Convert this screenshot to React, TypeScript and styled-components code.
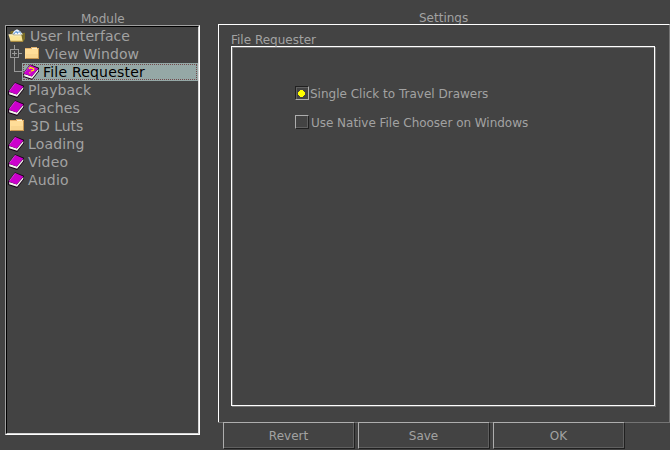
import React from "react";
import styled, { createGlobalStyle } from "styled-components";

const GlobalStyle = createGlobalStyle`
  * { box-sizing: border-box; }
  html, body, #root { margin: 0; width: 100%; height: 450px; overflow: hidden; background: #434343; }
`;

const Window = styled.main`
  display: grid;
  grid-template-columns: 200px 452px;
  column-gap: 18px;
  width: 670px;
  height: 450px;
  overflow: hidden;
  background: #434343;
  color: #a2a2a2;
  font: 12px/14px "DejaVu Sans", sans-serif;
  white-space: nowrap;
`;

const ModulePane = styled.section`
  display: flex;
  flex-direction: column;
  padding: 12px 0 0 5px;
`;

const Caption = styled.div<{ $shift: number }>`
  height: 13px;
  padding-left: ${(p) => p.$shift}px;
`;

const Tree = styled.div`
  height: 410px;
  border: 1px solid;
  border-color: #a0a0a0 #fff #fff #a0a0a0;
`;

const TreeInner = styled.div`
  height: 408px;
  border: 1px solid;
  border-color: #000 #d6d6d6 #d6d6d6 #000;
`;

const Row = styled.div`
  display: flex;
  height: 18px;
  padding-left: 1px;
  font-size: 14px;
  line-height: 18px;
`;

const RowIcon = styled.svg`
  width: 16px;
  height: 16px;
  margin-top: 1px;
  flex: none;
  overflow: visible;
`;

const RowText = styled.span<{ $gap: number; $tracking?: number }>`
  padding-left: ${(p) => p.$gap}px;
  letter-spacing: ${(p) => p.$tracking ?? 0}px;
`;

const Branch = styled.svg`
  width: 15px;
  height: 18px;
  flex: none;
`;

const Selected = styled.div`
  display: flex;
  flex: 1;
  height: 18px;
  margin-left: -1px;
  background: #95a8a6;
  color: #000;
  padding: 1px;
  outline: 1px dotted #70494b;
  outline-offset: -2px;
  line-height: 16px;
  & > svg { margin-top: 0; }
`;

const SettingsPane = styled.section`
  display: flex;
  flex-direction: column;
  padding-top: 11px;
`;

const Group = styled.div`
  height: 398px;
  padding: 8px 0 0 12px;
  border: solid;
  border-width: 1px 1px 0 1px;
  border-color: #fff #747474 #fff #fff;
`;

const Panel = styled.div`
  display: flex;
  flex-direction: column;
  gap: 15px;
  width: 424px;
  height: 360px;
  padding: 39px 0 0 63px;
  border: 1px solid #fff;
  box-shadow: 1px 1px 0 #747474, inset 1px 1px 0 #747474;
`;

const Option = styled.label`
  display: flex;
  height: 14px;
  line-height: 16px;
`;

const Box = styled.span<{ $on?: boolean }>`
  display: flex;
  padding: 3px 0 0 2px;
  width: 14px;
  height: 14px;
  border: 1px solid;
  border-color: ${(p) => (p.$on ? "#202020 #aeaeae #aeaeae #202020" : "#aeaeae #202020 #202020 #aeaeae")};
  box-shadow: ${(p) => (p.$on ? "inset 1px 1px 0 #606060" : "inset -1px -1px 0 #606060")};
`;

const Dot = styled.svg`
  width: 7px;
  height: 7px;
`;

const Buttons = styled.div`
  display: flex;
  gap: 3px;
  height: 28px;
  padding-left: 5px;
  border-top: 1px solid #747474;
`;

const Button = styled.button`
  width: 132px;
  height: 27px;
  margin: -1px 0 0;
  padding: 0 1px 0 0;
  background: #434343;
  color: #a2a2a2;
  font: inherit;
  border: 1px solid;
  border-color: #aeaeae #202020 #202020 #aeaeae;
  box-shadow: inset -1px -1px 0 #606060;
`;

const Book = ({ help = false }: { help?: boolean }) => (
  <RowIcon viewBox="0 0 16 16">
    <path d="M0 9.5L7 .2 16 3.8v3.4L9.2 16 .3 13z" fill="#150015" />
    <path d="M1.2 10l7.6 2.6L15.3 5v2l-6.2 7.8L1.2 12.2z" fill="#f2f1ec" />
    <path d="M.8 9.6L7.3 1l8 3.4-6.6 8z" fill="#cc00cc" />
    <path d="M1.6 8.6L7.2 1.2" fill="none" stroke="#ef62ef" strokeWidth=".7" />
    {help && (
      <path d="M6 4.8L7.3 3.6l3.4 1.1-.2 1.6-2.7.8M6.3 8.6l1.2.4" fill="none" stroke="#ffe800" strokeWidth="1.3" />
    )}
  </RowIcon>
);

const Folder = () => (
  <RowIcon viewBox="0 0 16 16" shapeRendering="crispEdges">
    <path d="M2 2h6V1h6v1h2v11H2z" fill="#e2b16c" />
    <path d="M2 3h13v9H2z" fill="#ffdd98" />
    <path d="M9 2h5v1H9z" fill="#fff0cb" />
    <path d="M3 8h12v4H3z" fill="#f9d58f" />
    <path d="M15 3h1v10H3v-1h12z" fill="#c4944f" />
  </RowIcon>
);

const OpenFolder = () => (
  <RowIcon viewBox="0 0 16 16">
    <path d="M2 5l1-2h3l8 2 3-.2V11l-2 3z" fill="#796c26" />
    <path d="M4 6.5L6 3l3-1.7L12 3l3 3.5z" fill="#e7f3ff" />
    <path d="M5 6l3-3 2 1 2-1 1 3z" fill="#5f98d5" />
    <path d="M6 6.5l2-2.2L9.5 6 11 4l2.5 2.5z" fill="#fff" />
    <path d="M.5 6.5h4l1 1h8l1.2 5.9H2.6z" fill="#fae696" />
    <path d="M.7 6.8h3.6l1 1h8" fill="none" stroke="#fffad9" strokeWidth=".8" />
    <path d="M2.8 13.3h12" fill="none" stroke="#aa8837" />
  </RowIcon>
);

const modules = [
  { name: "Playback", tracking: 0.08 },
  { name: "Caches", tracking: 0.2 },
  { name: "3D Luts", tracking: 0, folder: true },
  { name: "Loading", tracking: 0.18 },
  { name: "Video", tracking: 0.2 },
  { name: "Audio", tracking: 0.2 },
];

export default function App() {
  return (
    <>
      <GlobalStyle />
      <Window>
        <ModulePane>
          <Caption $shift={76}>Module</Caption>
          <Tree>
            <TreeInner>
              <Row><OpenFolder /><RowText $gap={6} $tracking={0.07}>User Interface</RowText></Row>
              <Row>
                <Branch viewBox="0 0 15 18" shapeRendering="crispEdges">
                  <path d="M6.5 0v4M6.5 13v5M11 8.5h3M2.5 4.5h8v8h-8zM4 8.5h5M6.5 6v5" fill="none" stroke="#999" />
                </Branch>
                <Folder /><RowText $gap={6} $tracking={0.12}>View Window</RowText>
              </Row>
              <Row>
                <Branch viewBox="0 0 15 18" shapeRendering="crispEdges">
                  <path d="M6.5 0v8.5H15" fill="none" stroke="#999" />
                </Branch>
                <Selected><Book help /><RowText $gap={4} $tracking={0.2}>File Requester</RowText></Selected>
              </Row>
              {modules.map(({ name, tracking, folder }) => (
                <Row key={name}>
                  {folder ? <Folder /> : <Book />}
                  <RowText $gap={folder ? 6 : 4} $tracking={tracking}>{name}</RowText>
                </Row>
              ))}
            </TreeInner>
          </Tree>
        </ModulePane>
        <SettingsPane>
          <Caption $shift={201}>Settings</Caption>
          <Group>
            <Caption $shift={0}>File Requester</Caption>
            <Panel>
              <Option>
                <Box $on>
                  <Dot viewBox="0 0 7 7" shapeRendering="crispEdges"><path d="M2 0h3v1h1v1h1v3H6v1H5v1H2V6H1V5H0V2h1V1h1z" fill="#ff0" /></Dot>
                </Box>
                <RowText $gap={1}>Single Click to Travel Drawers</RowText>
              </Option>
              <Option><Box /><RowText $gap={2} $tracking={-0.03}>Use Native File Chooser on Windows</RowText></Option>
            </Panel>
          </Group>
          <Buttons><Button>Revert</Button><Button>Save</Button><Button>OK</Button></Buttons>
        </SettingsPane>
      </Window>
    </>
  );
}
